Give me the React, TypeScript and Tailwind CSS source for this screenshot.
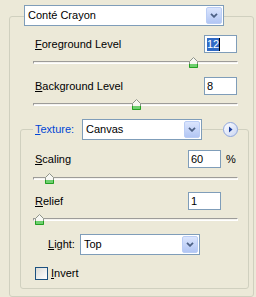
import React from "react";

function Chevron() {
  return (
    <svg width="8" height="5" viewBox="0 0 8 5">
      <path d="M1 0.8 L4 3.8 L7 0.8" fill="none" stroke="#4d6185" strokeWidth="1.8" />
    </svg>
  );
}

function Combo({ value, width }: { value: string; width: string }) {
  return (
    <div className={`flex h-[21px] shrink-0 border border-[#7f9db9] bg-white ${width}`}>
      <span className="flex flex-1 items-center pl-[3px]">{value}</span>
      <span className="m-[1px] flex w-[16px] items-center justify-center rounded-[2px] border border-[#bacdf5] bg-linear-to-b from-[#dbe5fd] to-[#b2c6f4]">
        <Chevron />
      </span>
    </div>
  );
}

function NumBox({ children }: { children: React.ReactNode }) {
  return (
    <div className="flex h-[18px] w-[33px] shrink-0 items-center border border-[#7f9db9] bg-white pl-[2px]">
      {children}
    </div>
  );
}

function Thumb() {
  return (
    <svg width="9" height="11" viewBox="0 0 9 11">
      <path d="M4.5 0.5 L8.5 4.5 V10.5 H0.5 V4.5 Z" fill="#f7f7f2" stroke="#8e948a" />
      <path d="M1 7 H8 V10 H1 Z" fill="#6fcf6f" />
      <path d="M0.5 7 V10.5 H8.5 V7" fill="none" stroke="#21a121" />
    </svg>
  );
}

function Track({ at, className }: { at: number; className: string }) {
  return (
    <div
      className={`relative h-[3px] w-[205px] border border-t-[#9d9c99] border-l-[#9d9c99] border-r-white border-b-white bg-[#f4f3ee] ${className}`}
    >
      <span className="absolute top-[-5px] flex" style={{ left: at }}>
        <Thumb />
      </span>
    </div>
  );
}

function Circle() {
  return (
    <svg width="15" height="15" viewBox="0 0 15 15">
      <defs>
        <linearGradient id="cg" x1="0" y1="0" x2="1" y2="1">
          <stop offset="0" stopColor="#ffffff" />
          <stop offset="1" stopColor="#c9d5f2" />
        </linearGradient>
      </defs>
      <circle cx="7.5" cy="7.5" r="7" fill="url(#cg)" stroke="#8fa6dc" />
      <path d="M6 4.5 L9.5 7.5 L6 10.5 Z" fill="#1c3f9c" />
    </svg>
  );
}

export default function App() {
  return (
    <div className="h-[297px] w-[256px] overflow-hidden bg-[#ece9d8] pl-[9px] pt-[16px] font-['Liberation_Sans',Arial,sans-serif] text-[11px] leading-[13px] text-black">
      <div className="h-[281px] w-[245px] rounded-[3px] border border-[#d0d0bf]">
        <div className="-mt-[12px] ml-[14px]">
          <Combo value="Conté Crayon" width="w-[200px]" />
        </div>

        <div className="mt-[9px] flex h-[18px] items-center justify-between pl-[25px] pr-[16px]">
          <span>
            <u>F</u>oreground Level
          </span>
          <NumBox>
            <span className="bg-[#316ac5] text-white">12</span>
            <span className="h-[13px] w-[1px] bg-black" />
          </NumBox>
        </div>
        <Track at={155} className="ml-[23px] mt-[8px]" />

        <div className="mt-[13px] flex h-[18px] items-center justify-between pl-[25px] pr-[16px]">
          <span>
            <u>B</u>ackground Level
          </span>
          <NumBox>8</NumBox>
        </div>
        <Track at={98} className="ml-[23px] mt-[8px]" />

        <div className="ml-[10px] mt-[23px] h-[160px] w-[229px] rounded-[3px] border border-[#d0d0bf]">
          <div className="-mt-[11px] flex h-[21px] items-center">
            <span className="ml-[12px] flex h-[21px] w-[49px] items-center bg-[#ece9d8] pl-[2px] text-[#0046d5]">
              <span>
                <u>T</u>exture:
              </span>
            </span>
            <Combo value="Canvas" width="w-[120px]" />
            <span className="ml-[21px] flex">
              <Circle />
            </span>
          </div>

          <div className="mt-[10px] flex h-[18px] items-center pl-[14px]">
            <span className="flex-1">
              <u>S</u>caling
            </span>
            <NumBox>60</NumBox>
            <span className="w-[27px] pl-[5px]">%</span>
          </div>
          <Track at={11} className="ml-[12px] mt-[9px]" />

          <div className="mt-[12px] flex h-[18px] items-center pl-[14px]">
            <span className="flex-1">
              <u>R</u>elief
            </span>
            <NumBox>1</NumBox>
            <span className="w-[27px]" />
          </div>
          <Track at={1} className="ml-[12px] mt-[8px]" />

          <div className="mt-[13px] flex h-[21px] items-center pl-[27px]">
            <span className="w-[32px]">
              <u>L</u>ight:
            </span>
            <Combo value="Top" width="w-[120px]" />
          </div>

          <div className="mt-[12px] flex h-[13px] items-center pl-[14px]">
            <span className="h-[13px] w-[13px] border border-[#1c5180] bg-linear-to-br from-[#dcdcd7] to-white" />
            <span className="ml-[3px]">
              <u>I</u>nvert
            </span>
          </div>
        </div>
      </div>
    </div>
  );
}
